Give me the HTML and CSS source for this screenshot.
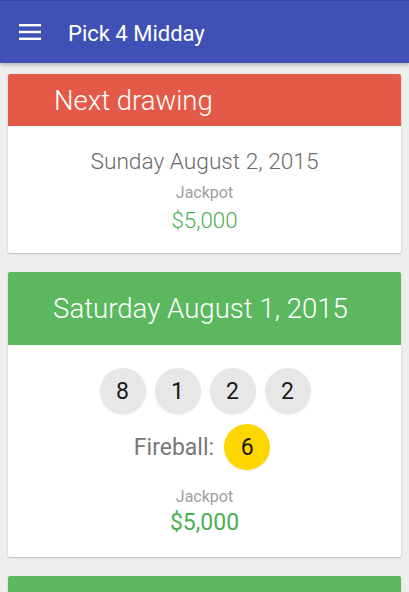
FILE: index.html
```html
<!DOCTYPE html>
<html>
<head>
<meta charset="utf-8">
<link rel="stylesheet" href="styles.css">
</head>
<body>
<header class="appbar">
  <svg class="menu" width="22" height="16" viewBox="0 0 22 16">
    <rect x="0" y="0" width="22" height="2.4" fill="#fff"/>
    <rect x="0" y="6.8" width="22" height="2.4" fill="#fff"/>
    <rect x="0" y="13.6" width="22" height="2.4" fill="#fff"/>
  </svg>
  <div class="title">Pick 4 Midday</div>
</header>
<main class="list">
  <section class="card">
    <div class="card-head red left">Next drawing</div>
    <div class="card-body next">
      <div class="date">Sunday August 2, 2015</div>
      <div class="jp-label">Jackpot</div>
      <div class="jp-value light">$5,000</div>
    </div>
  </section>
  <section class="card">
    <div class="card-head green">Saturday August 1, 2015</div>
    <div class="card-body result">
      <div class="balls">
        <span class="ball">8</span>
        <span class="ball">1</span>
        <span class="ball">2</span>
        <span class="ball">2</span>
      </div>
      <div class="fire-row">
        <span class="fire-label">Fireball:</span>
        <span class="ball yellow">6</span>
      </div>
      <div class="jp-label jp-gap">Jackpot</div>
      <div class="jp-value">$5,000</div>
    </div>
  </section>
  <section class="card">
    <div class="card-head green"></div>
  </section>
</main>
</body>
</html>
```
FILE: styles.css
```css
html, body {
  margin: 0;
  padding: 0;
  height: 592px;
  overflow: hidden;
}
body {
  background: #eeeeee;
  font-family: Roboto, "Noto Sans", sans-serif;
}
.appbar {
  height: 62px;
  border-top: 1px solid #34449c;
  background: #3f51b5;
  display: flex;
  align-items: center;
  box-shadow: 0 2px 4px rgba(0,0,0,0.25);
  position: relative;
  z-index: 2;
}
.menu {
  margin-left: 19px;
  margin-right: 27px;
}
.title {
  color: #fff;
  font-size: 22px;
  margin-top: 2px;
}
.list {
  padding: 11px 8px 0;
  display: flex;
  flex-direction: column;
  gap: 19px;
}
.card {
  background: #fff;
  border-radius: 2px;
  overflow: hidden;
  box-shadow: 0 1px 2px rgba(0,0,0,0.22);
}
.card-head {
  color: #fff;
  font-weight: 300;
  text-align: center;
}
.card-head.red {
  background: #e45a48;
  height: 52px;
  line-height: 53px;
  font-size: 27.5px;
}
.card-head.left {
  text-align: left;
  padding-left: 46px;
}
.card-head.green {
  background: #5cb85f;
  height: 73px;
  line-height: 74px;
  font-size: 27.6px;
  padding-right: 8px;
}
.card-body {
  display: flex;
  flex-direction: column;
  align-items: center;
}
.card-body.next {
  padding: 22px 0 19px;
}
.card-body.result {
  padding: 23px 0 20px;
}
.date {
  font-size: 22.7px;
  line-height: 28px;
  font-weight: 300;
  color: #6b6b6b;
}
.jp-label {
  font-size: 16px;
  line-height: 20px;
  color: #9e9e9e;
  margin-top: 7px;
}
.jp-label.jp-gap {
  margin-top: 17px;
}
.jp-value {
  font-size: 23px;
  line-height: 28px;
  color: #4caf50;
  margin-top: 3px;
}
.result .jp-value {
  margin-top: 2px;
}
.jp-value.light {
  font-weight: 300;
  font-size: 22.3px;
}
.balls {
  display: flex;
  gap: 9px;
  margin-left: 1px;
}
.ball {
  width: 46px;
  height: 46px;
  border-radius: 50%;
  background: #e7e7e7;
  color: #1a1a1a;
  font-size: 23px;
  display: flex;
  align-items: center;
  justify-content: center;
  box-shadow: 0 1px 2px rgba(0,0,0,0.08);
}
.ball.yellow {
  background: #fdd600;
}
.fire-row {
  display: flex;
  align-items: center;
  gap: 10px;
  margin-top: 10px;
  margin-right: 5px;
}
.fire-label {
  font-size: 23px;
  color: #777;
}
```
